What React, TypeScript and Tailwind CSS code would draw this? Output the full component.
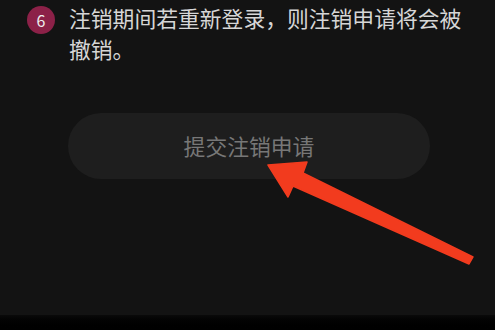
export default function App() {
  return (
    <div
      className="relative flex h-[330px] w-[495px] flex-col overflow-hidden bg-black"
      style={{ fontFamily: '"Noto Sans CJK SC", "Noto Sans", sans-serif' }}
    >
      <div className="flex-1 bg-[#131313] pt-[2px]">
        <div className="flex gap-[14px] pl-[27px]">
          <div className="mt-[4px] flex h-[28px] w-[28px] shrink-0 items-center justify-center rounded-full bg-[#8c2148] text-[16px] leading-none text-[#eee]">
            6
          </div>
          <p className="w-[400px] text-[21.8px] leading-[31px] text-[#d6d6d6]">
            注销期间若重新登录，则注销申请将会被撤销。
          </p>
        </div>
        <div className="mt-[49px] ml-[68px] flex h-[66px] w-[362px] items-center justify-center rounded-full bg-[#1e1e1e]">
          <span className="text-[21.8px] text-[#777777]">提交注销申请</span>
        </div>
      </div>
      <div className="h-[15px] bg-gradient-to-b from-[#0a0a0a] to-black" />

      <svg className="pointer-events-none absolute inset-0" width="495" height="330" viewBox="0 0 495 330">
        <polygon
          points="268,165 307,162 303,173 473,257 469,264 293,186 288,197"
          fill="#f23b1e"
          strokeLinejoin="round"
          stroke="#f23b1e"
          strokeWidth="1.5"
        />
      </svg>
    </div>
  );
}
